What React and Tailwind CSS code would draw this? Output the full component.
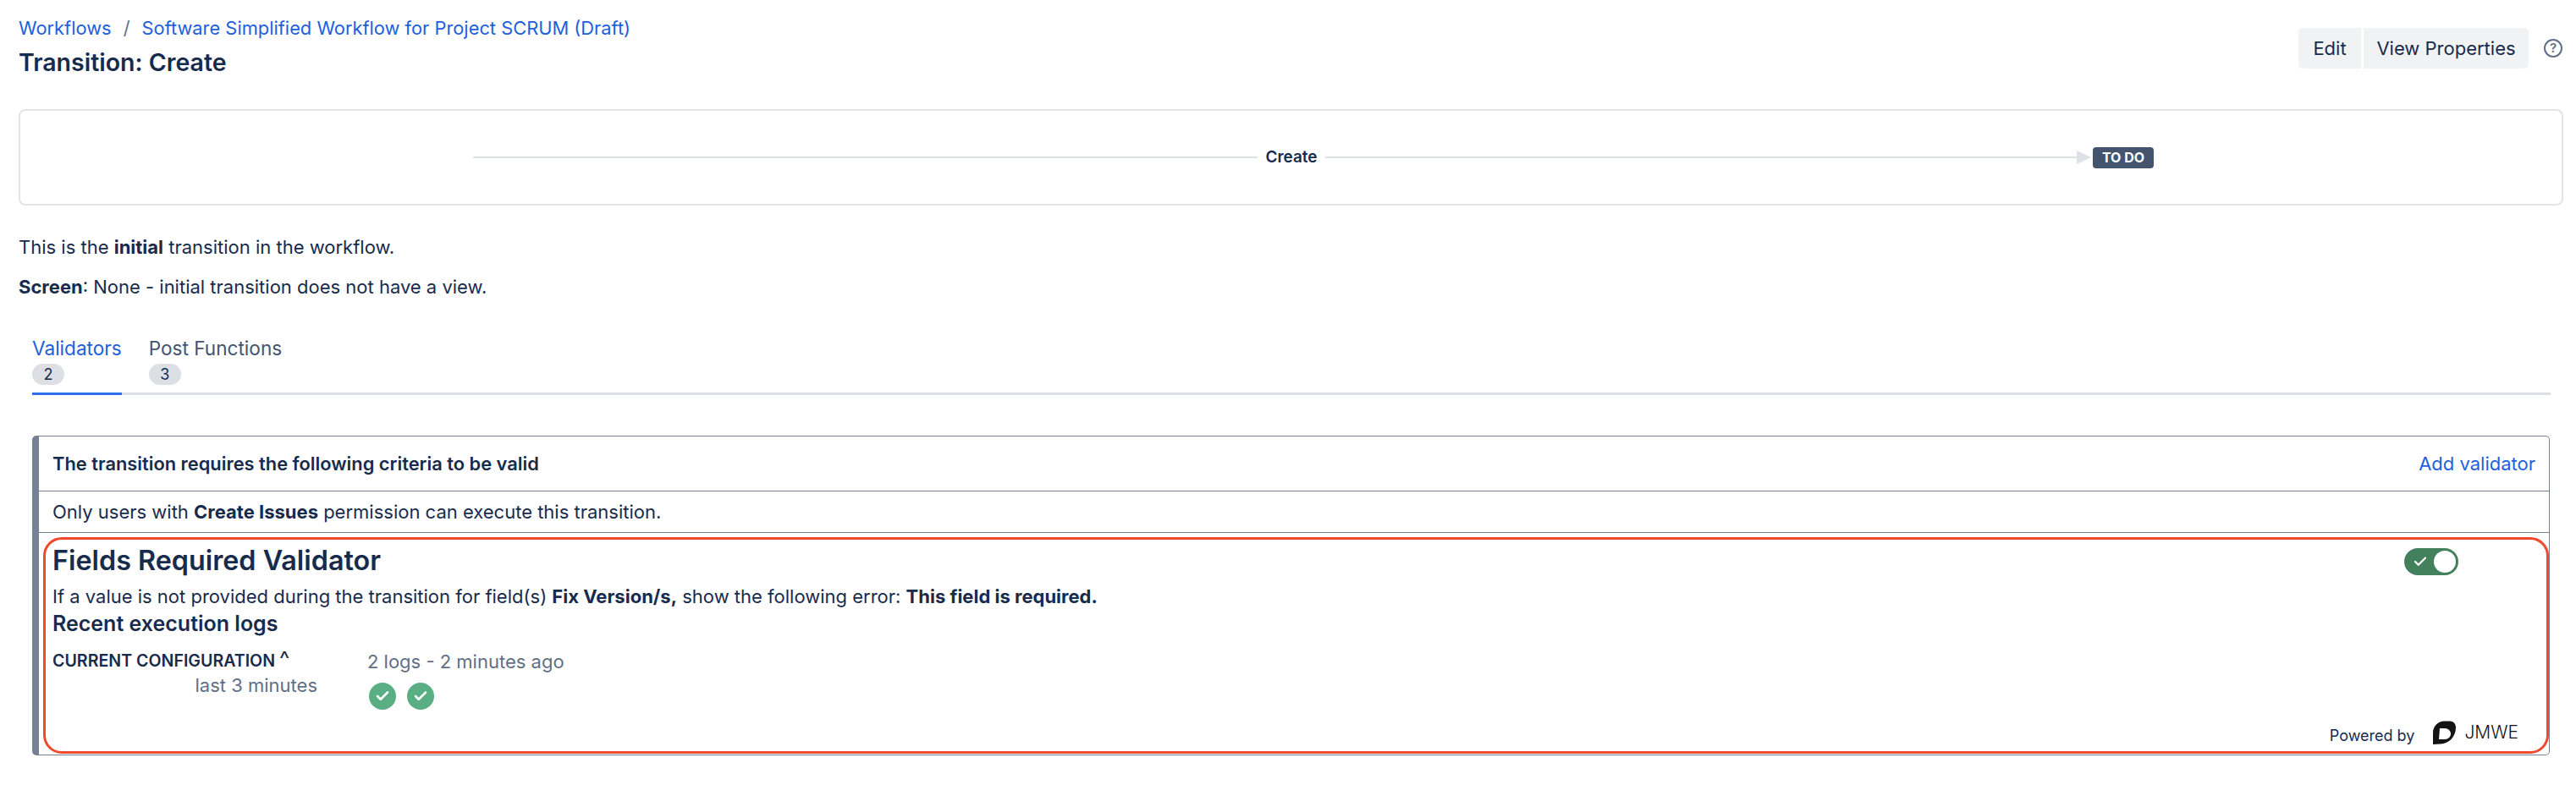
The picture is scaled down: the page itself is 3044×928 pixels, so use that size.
import React from 'react';
import { Check } from 'lucide-react';

const JmweLogo = () => (
  <svg viewBox="0 0 27 28" className="w-[27px] h-[28px]">
    <path fill="#141414" d="M0 28V14C0 6.5 6 0.5 13.5 0.5H20C24 0.5 27 3.5 27 8 27 19 19 27 9 27.5Z" />
    <path fill="#fff" d="M8 9h6c4 0 7 3 7 6.5s-3 6.5-7 6.5H7z" />
  </svg>
);

const StatusDot = () => (
  <span className="w-8 h-8 rounded-full bg-[#5aae83] flex items-center justify-center">
    <Check className="w-[18px] h-[18px] text-white" strokeWidth={3.5} />
  </span>
);

const Tab = ({ label, count, active }) => (
  <div className={`h-[66px] border-b-[3px] box-content ${active ? 'border-[#2f6feb]' : 'border-transparent'}`}>
    <div className={`text-[22.6px] leading-[28px] ${active ? 'text-[#1d5fdc]' : 'text-[#44546f]'}`}>{label}</div>
    <div className="mt-[4px] w-[38px] h-[25px] rounded-full bg-[#dcdfe4] text-[18px] leading-[25px] text-center text-[#172b4d]">{count}</div>
  </div>
);

export default function App() {
  return (
    <div className="w-[3044px] h-[928px] bg-white text-[#172b4d] font-['Inter',sans-serif] pl-[22px] pr-[15px] overflow-hidden">
      <div className="flex justify-between h-[129px]">
        <div className="pt-[19px]">
          <div className="flex text-[21.85px] leading-[28px] text-[#1d5fdc]">
            <span>Workflows</span>
            <span className="w-[36px] text-center text-[#626f86]">/</span>
            <span>Software Simplified Workflow for Project SCRUM (Draft)</span>
          </div>
          <h1 className="mt-[9px] text-[28.5px] leading-[36px] font-semibold">Transition: Create</h1>
        </div>
        <div className="flex items-start pt-[33px]">
          <div className="h-12 w-[74px] bg-[#f1f2f4] rounded-l-[5px] text-[22px] leading-[48px] text-center">Edit</div>
          <div className="ml-[3px] h-12 w-[195px] bg-[#f1f2f4] rounded-r-[5px] text-[22px] leading-[48px] text-center">View Properties</div>
          <div className="ml-[18px] mr-[1px] mt-[13px] w-[22px] h-[22px] rounded-full border-[2.5px] border-[#626f86] text-[#626f86] text-[15px] leading-[17px] text-center font-semibold">?</div>
        </div>
      </div>

      <div className="h-[114px] border-2 border-[#e3e4e9] rounded-[8px] flex items-center pl-[535px] pr-[482px]">
        <div className="w-[927px] h-[2px] bg-[#dfe1e8]" />
        <div className="w-[80px] text-center text-[19px] leading-[24px] font-semibold">Create</div>
        <div className="flex-1 h-[2px] bg-[#dfe1e8]" />
        <div className="w-0 h-0 border-y-[8px] border-y-transparent border-l-[17px] border-l-[#dfe1e8]" />
        <div className="ml-[2px] w-[72px] h-[25px] rounded-[4px] bg-[#44546f] text-white text-[16px] leading-[25px] font-bold text-center">TO DO</div>
      </div>

      <p className="mt-[35px] text-[22px] leading-[28px]">This is the <b className="font-bold">initial</b> transition in the workflow.</p>
      <p className="mt-[19px] text-[22px] leading-[28px]"><b className="font-bold">Screen</b>: None - initial transition does not have a view.</p>

      <div className="mt-[45px] ml-[16px] mr-[15px] flex gap-[32px] border-b-[3px] border-[#dcdfe4] h-[69px] box-border">
        <Tab label="Validators" count={2} active />
        <Tab label="Post Functions" count={3} />
      </div>

      <div className="mt-[48px] ml-[16px] mr-[16px] h-[378px] border border-[#758195] border-l-[8px] rounded-[5px] flex flex-col">
        <div className="h-[65px] shrink-0 border-b border-[#758195] flex items-center justify-between pl-[16px] pr-[16px]">
          <span className="text-[21.85px] font-semibold">The transition requires the following criteria to be valid</span>
          <span className="text-[22px] text-[#1d5fdc]">Add validator</span>
        </div>
        <div className="h-[49px] shrink-0 border-b border-[#758195] flex items-center pl-[16px] text-[22px]">
          <span>Only users with <b className="font-bold">Create Issues</b> permission can execute this transition.</span>
        </div>
        <div className="flex-1 ml-[5px] mt-[5px] mb-[1px] border-[3px] border-[#f0492b] rounded-[22px] pl-[8px] pr-[32px] flex flex-col">
          <div className="flex justify-between items-start">
            <div>
              <h2 className="text-[32.3px] leading-[40px] mt-[5px] font-semibold">Fields Required Validator</h2>
              <p className="text-[22px] leading-[28px] mt-[8px]">If a value is not provided during the transition for field(s) <b className="font-bold">Fix Version/s,</b> show the following error: <b className="font-bold">This field is required.</b></p>
              <h3 className="text-[25px] leading-[32px] mt-[2px] font-semibold">Recent execution logs</h3>
            </div>
            <div className="mt-[10px] mr-[72px] w-16 h-8 rounded-full bg-[#43805c] flex items-center justify-between pl-[10px] pr-[3px]">
              <Check className="w-[18px] h-[18px] text-white" strokeWidth={3} />
              <span className="w-[26px] h-[26px] rounded-full bg-white" />
            </div>
          </div>
          <div className="flex mt-[16px]">
            <div className="w-[313px] text-right">
              <div className="text-left text-[19.6px] leading-[24px] font-semibold whitespace-nowrap">CURRENT CONFIGURATION <span className="text-[26px] leading-[20px] font-normal">^</span></div>
              <div className="text-[22px] leading-[28px] mt-[3px] text-[#626f86]">last 3 minutes</div>
            </div>
            <div className="ml-[59px] -mt-[1px]">
              <div className="text-[22px] leading-[28px] text-[#626f86]">2 logs - 2 minutes ago</div>
              <div className="flex gap-[13px] mt-[11px] ml-[2px]">
                <StatusDot />
                <StatusDot />
              </div>
            </div>
          </div>
          <div className="mt-auto mb-[5px] mr-[1px] flex justify-end items-center">
            <span className="text-[18px] text-[#172b4d] mt-[8px]">Powered by</span>
            <span className="ml-[22px]"><JmweLogo /></span>
            <span className="ml-[10px] text-[21px] font-light text-[#141414]">JMWE</span>
          </div>
        </div>
      </div>
    </div>
  );
}
